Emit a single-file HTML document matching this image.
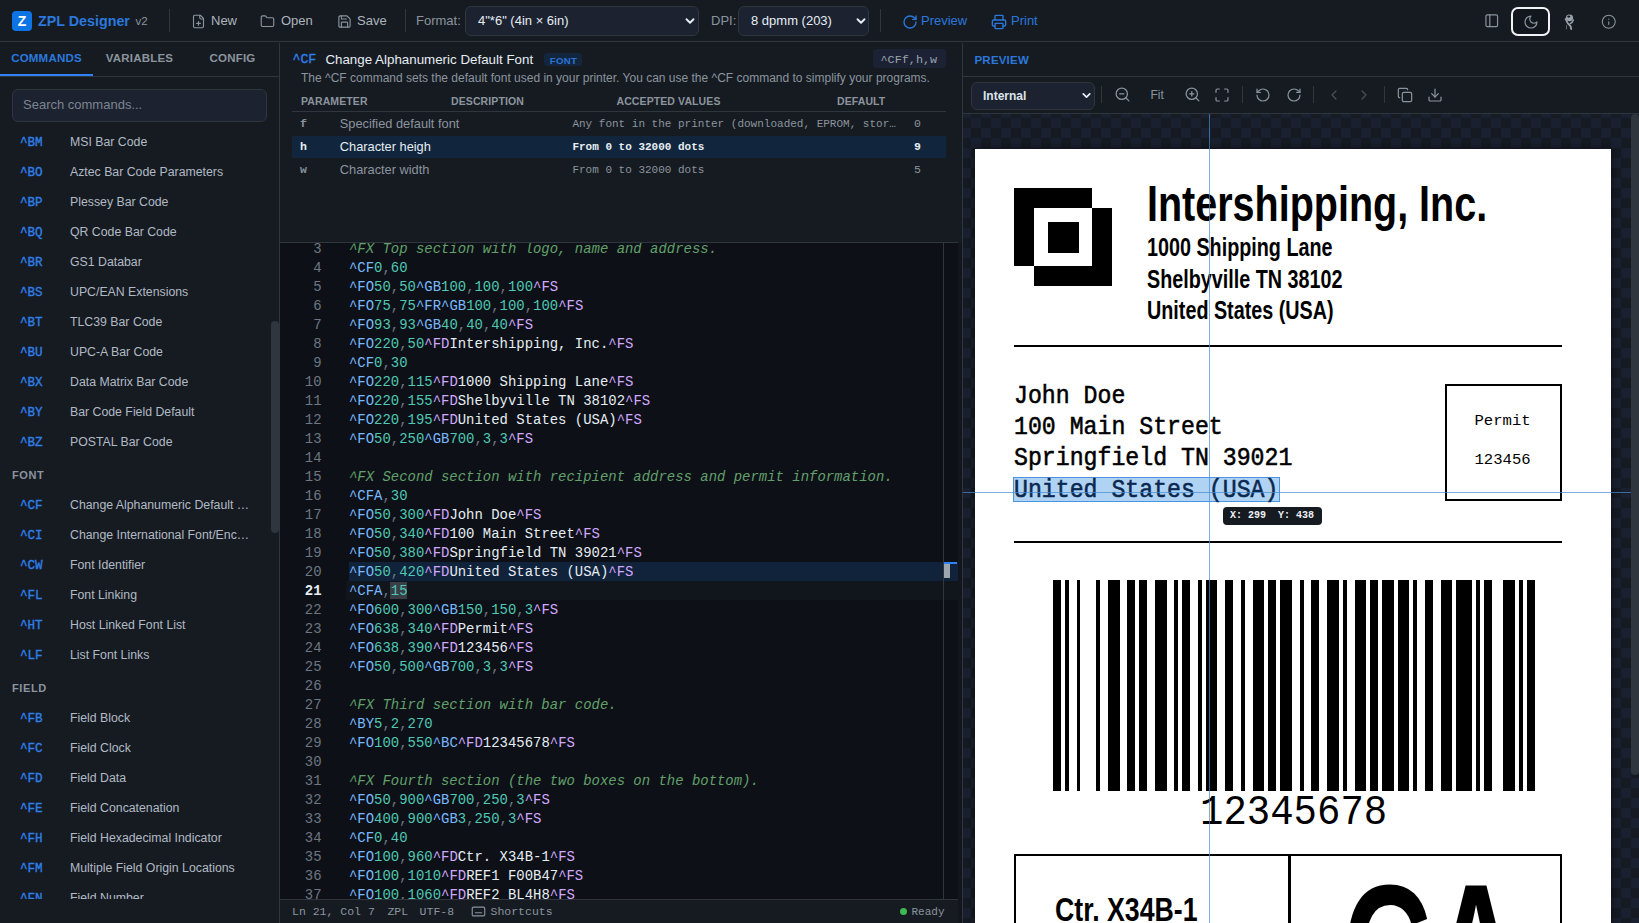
<!DOCTYPE html><html><head><meta charset="utf-8"><style>
*{margin:0;padding:0;box-sizing:border-box}
html,body{width:1639px;height:923px;overflow:hidden;background:#161b22;font-family:"Liberation Sans", sans-serif;}
.a{position:absolute;white-space:pre;}
.m{font-family:"Liberation Mono", monospace;}
</style></head><body>
<div class="a" style="left:0;top:0;width:1639px;height:42px;background:#161b22;border-bottom:1px solid #30363d"></div><div class="a" style="left:12px;top:11px;width:20px;height:20px;border-radius:4px;background:#0d74e6"></div><div class="a" style="left:12px;top:11px;width:20px;height:20px;line-height:20px;text-align:center;color:#fff;font-weight:bold;font-size:14px">Z</div><div class="a" style="left:38px;top:12px;font-size:14.3px;font-weight:bold;color:#2a78dc;line-height:18px">ZPL Designer</div><div class="a" style="left:135.5px;top:14px;font-size:11.5px;color:#8b949e;line-height:14px">v2</div><div class="a" style="left:169px;top:9px;width:1px;height:23px;background:#30363d"></div><svg style="position:absolute;left:191px;top:13.5px" width="15" height="15" viewBox="0 0 24 24" fill="none" stroke="#8b949e" stroke-width="1.8" stroke-linecap="round" stroke-linejoin="round" ><path d="M15 2H6a2 2 0 0 0-2 2v16a2 2 0 0 0 2 2h12a2 2 0 0 0 2-2V7Z"/><path d="M14 2v4a2 2 0 0 0 2 2h4"/><path d="M9 15h6"/><path d="M12 18v-6"/></svg><div class="a" style="left:211px;top:13px;font-size:13px;color:#adb5bd;line-height:16px">New</div><svg style="position:absolute;left:260px;top:13.5px" width="15" height="15" viewBox="0 0 24 24" fill="none" stroke="#8b949e" stroke-width="1.8" stroke-linecap="round" stroke-linejoin="round" ><path d="M20 20a2 2 0 0 0 2-2V8a2 2 0 0 0-2-2h-7.9a2 2 0 0 1-1.69-.9L9.6 3.9A2 2 0 0 0 7.93 3H4a2 2 0 0 0-2 2v13a2 2 0 0 0 2 2Z"/></svg><div class="a" style="left:281px;top:13px;font-size:13px;color:#adb5bd;line-height:16px">Open</div><svg style="position:absolute;left:337px;top:13.5px" width="15" height="15" viewBox="0 0 24 24" fill="none" stroke="#8b949e" stroke-width="1.8" stroke-linecap="round" stroke-linejoin="round" ><path d="M15.2 3a2 2 0 0 1 1.4.6l3.8 3.8a2 2 0 0 1 .6 1.4V19a2 2 0 0 1-2 2H5a2 2 0 0 1-2-2V5a2 2 0 0 1 2-2z"/><path d="M17 21v-7a1 1 0 0 0-1-1H8a1 1 0 0 0-1 1v7"/><path d="M7 3v4a1 1 0 0 0 1 1h7"/></svg><div class="a" style="left:357px;top:13px;font-size:13px;color:#adb5bd;line-height:16px">Save</div><div class="a" style="left:405px;top:9px;width:1px;height:23px;background:#30363d"></div><div class="a" style="left:416px;top:13px;font-size:13px;color:#8b949e;line-height:16px">Format:</div><div class="a" style="left:465px;top:6px;width:234px;height:30px;border:1px solid #30363d;border-radius:6px;background:#1c2230"></div><div class="a" style="left:478px;top:13px;font-size:13px;color:#e6edf3;line-height:16px">4"*6" (4in × 6in)</div><svg style="position:absolute;left:683px;top:14px" width="14" height="14" viewBox="0 0 24 24" fill="none" stroke="#e6edf3" stroke-width="3.2" stroke-linecap="round" stroke-linejoin="round" ><path d="m6 9 6 6 6-6"/></svg><div class="a" style="left:711px;top:13px;font-size:13px;color:#8b949e;line-height:16px">DPI:</div><div class="a" style="left:738px;top:6px;width:131px;height:30px;border:1px solid #30363d;border-radius:6px;background:#1c2230"></div><div class="a" style="left:751px;top:13px;font-size:13px;color:#e6edf3;line-height:16px">8 dpmm (203)</div><svg style="position:absolute;left:854px;top:14px" width="14" height="14" viewBox="0 0 24 24" fill="none" stroke="#e6edf3" stroke-width="3.2" stroke-linecap="round" stroke-linejoin="round" ><path d="m6 9 6 6 6-6"/></svg><div class="a" style="left:880px;top:9px;width:1px;height:23px;background:#30363d"></div><svg style="position:absolute;left:901.5px;top:13.5px" width="16" height="16" viewBox="0 0 24 24" fill="none" stroke="#2a78dc" stroke-width="2" stroke-linecap="round" stroke-linejoin="round" ><path d="M21 12a9 9 0 1 1-9-9c2.52 0 4.93 1 6.74 2.74L21 8"/><path d="M21 3v5h-5"/></svg><div class="a" style="left:921px;top:13px;font-size:13px;color:#2a78dc;line-height:16px">Preview</div><svg style="position:absolute;left:991px;top:13.5px" width="16" height="16" viewBox="0 0 24 24" fill="none" stroke="#2a78dc" stroke-width="2" stroke-linecap="round" stroke-linejoin="round" ><path d="M6 18H4a2 2 0 0 1-2-2v-5a2 2 0 0 1 2-2h16a2 2 0 0 1 2 2v5a2 2 0 0 1-2 2h-2"/><path d="M6 9V3a1 1 0 0 1 1-1h10a1 1 0 0 1 1 1v6"/><rect x="6" y="14" width="12" height="8" rx="1"/></svg><div class="a" style="left:1011px;top:13px;font-size:13px;color:#2a78dc;line-height:16px">Print</div><svg style="position:absolute;left:1483.5px;top:13.3px" width="15.5" height="15.5" viewBox="0 0 24 24" fill="none" stroke="#8b949e" stroke-width="1.8" stroke-linecap="round" stroke-linejoin="round" ><rect width="18" height="18" x="3" y="3" rx="2"/><path d="M9 3v18"/></svg><div class="a" style="left:1511px;top:7px;width:39px;height:29px;border:2px solid #f0f3f6;border-radius:7px;background:#12161d"></div><svg style="position:absolute;left:1523px;top:13.5px" width="16" height="16" viewBox="0 0 24 24" fill="none" stroke="#8b949e" stroke-width="1.8" stroke-linecap="round" stroke-linejoin="round" ><path d="M12 3a6 6 0 0 0 9 9 9 9 0 1 1-9-9Z"/></svg><svg class="a" style="left:1555px;top:8px" width="30" height="26" viewBox="0 0 30 26" fill="none" stroke="#9aa2ab" stroke-linecap="round"><ellipse cx="14.5" cy="9.8" rx="3.6" ry="3.4" fill="#9aa2ab" stroke="none"/><ellipse cx="13.8" cy="8.6" rx="1.6" ry="1.1" fill="#161b22" stroke="none"/><path d="M10.6 11 Q12.5 16 15.6 18.2 L16.2 21" stroke-width="1.8"/><path d="M18.3 12 Q17.5 14.5 15.2 15.6" stroke-width="1.5"/><path d="M11.5 17.5 L11.5 21" stroke-width="1" stroke="#5d656e"/></svg><svg style="position:absolute;left:1600.5px;top:13.5px" width="15.5" height="15.5" viewBox="0 0 24 24" fill="none" stroke="#8b949e" stroke-width="1.7" stroke-linecap="round" stroke-linejoin="round" ><circle cx="12" cy="12" r="10"/><path d="M12 16v-4"/><path d="M12 8h.01"/></svg><div class="a" style="left:0;top:43px;width:279px;height:880px;background:#161b22"></div><div class="a" style="left:279px;top:43px;width:1px;height:880px;background:#30363d"></div><div class="a" style="left:0;top:76px;width:279px;height:1px;background:#30363d"></div><div class="a" style="left:0;top:74px;width:93px;height:2px;background:#2f81f7"></div><div class="a" style="left:0px;top:50px;width:93px;text-align:center;font-size:11.5px;font-weight:bold;letter-spacing:0.2px;color:#2a78dc;line-height:16px">COMMANDS</div><div class="a" style="left:93px;top:50px;width:93px;text-align:center;font-size:11.5px;font-weight:bold;letter-spacing:0.2px;color:#8b949e;line-height:16px">VARIABLES</div><div class="a" style="left:186px;top:50px;width:93px;text-align:center;font-size:11.5px;font-weight:bold;letter-spacing:0.2px;color:#8b949e;line-height:16px">CONFIG</div><div class="a" style="left:12px;top:89px;width:255px;height:33px;border:1px solid #30363d;border-radius:6px;background:#1c2230"></div><div class="a" style="left:23px;top:97px;font-size:13px;color:#7d8590;line-height:16px">Search commands...</div><div class="a" style="left:0;top:124px;width:270px;height:775px;overflow:hidden"><div class="a m" style="left:20px;top:11.5px;font-size:12.6px;font-weight:normal;-webkit-text-stroke:0.35px #2f7fe8;color:#2f7fe8;line-height:15px">^BM</div><div class="a" style="left:70px;top:11.0px;font-size:12.3px;color:#b1bac4;line-height:15px">MSI Bar Code</div><div class="a m" style="left:20px;top:41.5px;font-size:12.6px;font-weight:normal;-webkit-text-stroke:0.35px #2f7fe8;color:#2f7fe8;line-height:15px">^BO</div><div class="a" style="left:70px;top:41.0px;font-size:12.3px;color:#b1bac4;line-height:15px">Aztec Bar Code Parameters</div><div class="a m" style="left:20px;top:71.5px;font-size:12.6px;font-weight:normal;-webkit-text-stroke:0.35px #2f7fe8;color:#2f7fe8;line-height:15px">^BP</div><div class="a" style="left:70px;top:71.0px;font-size:12.3px;color:#b1bac4;line-height:15px">Plessey Bar Code</div><div class="a m" style="left:20px;top:101.5px;font-size:12.6px;font-weight:normal;-webkit-text-stroke:0.35px #2f7fe8;color:#2f7fe8;line-height:15px">^BQ</div><div class="a" style="left:70px;top:101.0px;font-size:12.3px;color:#b1bac4;line-height:15px">QR Code Bar Code</div><div class="a m" style="left:20px;top:131.5px;font-size:12.6px;font-weight:normal;-webkit-text-stroke:0.35px #2f7fe8;color:#2f7fe8;line-height:15px">^BR</div><div class="a" style="left:70px;top:131.0px;font-size:12.3px;color:#b1bac4;line-height:15px">GS1 Databar</div><div class="a m" style="left:20px;top:161.5px;font-size:12.6px;font-weight:normal;-webkit-text-stroke:0.35px #2f7fe8;color:#2f7fe8;line-height:15px">^BS</div><div class="a" style="left:70px;top:161.0px;font-size:12.3px;color:#b1bac4;line-height:15px">UPC/EAN Extensions</div><div class="a m" style="left:20px;top:191.5px;font-size:12.6px;font-weight:normal;-webkit-text-stroke:0.35px #2f7fe8;color:#2f7fe8;line-height:15px">^BT</div><div class="a" style="left:70px;top:191.0px;font-size:12.3px;color:#b1bac4;line-height:15px">TLC39 Bar Code</div><div class="a m" style="left:20px;top:221.5px;font-size:12.6px;font-weight:normal;-webkit-text-stroke:0.35px #2f7fe8;color:#2f7fe8;line-height:15px">^BU</div><div class="a" style="left:70px;top:221.0px;font-size:12.3px;color:#b1bac4;line-height:15px">UPC-A Bar Code</div><div class="a m" style="left:20px;top:251.5px;font-size:12.6px;font-weight:normal;-webkit-text-stroke:0.35px #2f7fe8;color:#2f7fe8;line-height:15px">^BX</div><div class="a" style="left:70px;top:251.0px;font-size:12.3px;color:#b1bac4;line-height:15px">Data Matrix Bar Code</div><div class="a m" style="left:20px;top:281.5px;font-size:12.6px;font-weight:normal;-webkit-text-stroke:0.35px #2f7fe8;color:#2f7fe8;line-height:15px">^BY</div><div class="a" style="left:70px;top:281.0px;font-size:12.3px;color:#b1bac4;line-height:15px">Bar Code Field Default</div><div class="a m" style="left:20px;top:311.5px;font-size:12.6px;font-weight:normal;-webkit-text-stroke:0.35px #2f7fe8;color:#2f7fe8;line-height:15px">^BZ</div><div class="a" style="left:70px;top:311.0px;font-size:12.3px;color:#b1bac4;line-height:15px">POSTAL Bar Code</div><div class="a" style="left:12px;top:344.0px;font-size:11px;font-weight:bold;letter-spacing:0.6px;color:#8b949e;line-height:14px">FONT</div><div class="a m" style="left:20px;top:374.7px;font-size:12.6px;font-weight:normal;-webkit-text-stroke:0.35px #2f7fe8;color:#2f7fe8;line-height:15px">^CF</div><div class="a" style="left:70px;top:374.2px;font-size:12.3px;color:#b1bac4;line-height:15px">Change Alphanumeric Default …</div><div class="a m" style="left:20px;top:404.7px;font-size:12.6px;font-weight:normal;-webkit-text-stroke:0.35px #2f7fe8;color:#2f7fe8;line-height:15px">^CI</div><div class="a" style="left:70px;top:404.2px;font-size:12.3px;color:#b1bac4;line-height:15px">Change International Font/Enc…</div><div class="a m" style="left:20px;top:434.7px;font-size:12.6px;font-weight:normal;-webkit-text-stroke:0.35px #2f7fe8;color:#2f7fe8;line-height:15px">^CW</div><div class="a" style="left:70px;top:434.2px;font-size:12.3px;color:#b1bac4;line-height:15px">Font Identifier</div><div class="a m" style="left:20px;top:464.7px;font-size:12.6px;font-weight:normal;-webkit-text-stroke:0.35px #2f7fe8;color:#2f7fe8;line-height:15px">^FL</div><div class="a" style="left:70px;top:464.2px;font-size:12.3px;color:#b1bac4;line-height:15px">Font Linking</div><div class="a m" style="left:20px;top:494.7px;font-size:12.6px;font-weight:normal;-webkit-text-stroke:0.35px #2f7fe8;color:#2f7fe8;line-height:15px">^HT</div><div class="a" style="left:70px;top:494.2px;font-size:12.3px;color:#b1bac4;line-height:15px">Host Linked Font List</div><div class="a m" style="left:20px;top:524.7px;font-size:12.6px;font-weight:normal;-webkit-text-stroke:0.35px #2f7fe8;color:#2f7fe8;line-height:15px">^LF</div><div class="a" style="left:70px;top:524.2px;font-size:12.3px;color:#b1bac4;line-height:15px">List Font Links</div><div class="a" style="left:12px;top:557.2px;font-size:11px;font-weight:bold;letter-spacing:0.6px;color:#8b949e;line-height:14px">FIELD</div><div class="a m" style="left:20px;top:587.9px;font-size:12.6px;font-weight:normal;-webkit-text-stroke:0.35px #2f7fe8;color:#2f7fe8;line-height:15px">^FB</div><div class="a" style="left:70px;top:587.4px;font-size:12.3px;color:#b1bac4;line-height:15px">Field Block</div><div class="a m" style="left:20px;top:617.9px;font-size:12.6px;font-weight:normal;-webkit-text-stroke:0.35px #2f7fe8;color:#2f7fe8;line-height:15px">^FC</div><div class="a" style="left:70px;top:617.4px;font-size:12.3px;color:#b1bac4;line-height:15px">Field Clock</div><div class="a m" style="left:20px;top:647.9px;font-size:12.6px;font-weight:normal;-webkit-text-stroke:0.35px #2f7fe8;color:#2f7fe8;line-height:15px">^FD</div><div class="a" style="left:70px;top:647.4px;font-size:12.3px;color:#b1bac4;line-height:15px">Field Data</div><div class="a m" style="left:20px;top:677.9px;font-size:12.6px;font-weight:normal;-webkit-text-stroke:0.35px #2f7fe8;color:#2f7fe8;line-height:15px">^FE</div><div class="a" style="left:70px;top:677.4px;font-size:12.3px;color:#b1bac4;line-height:15px">Field Concatenation</div><div class="a m" style="left:20px;top:707.9px;font-size:12.6px;font-weight:normal;-webkit-text-stroke:0.35px #2f7fe8;color:#2f7fe8;line-height:15px">^FH</div><div class="a" style="left:70px;top:707.4px;font-size:12.3px;color:#b1bac4;line-height:15px">Field Hexadecimal Indicator</div><div class="a m" style="left:20px;top:737.9px;font-size:12.6px;font-weight:normal;-webkit-text-stroke:0.35px #2f7fe8;color:#2f7fe8;line-height:15px">^FM</div><div class="a" style="left:70px;top:737.4px;font-size:12.3px;color:#b1bac4;line-height:15px">Multiple Field Origin Locations</div><div class="a m" style="left:20px;top:767.9px;font-size:12.6px;font-weight:normal;-webkit-text-stroke:0.35px #2f7fe8;color:#2f7fe8;line-height:15px">^FN</div><div class="a" style="left:70px;top:767.4px;font-size:12.3px;color:#b1bac4;line-height:15px">Field Number</div></div><div class="a" style="left:271px;top:321px;width:8px;height:212px;border-radius:4px;background:#30363d"></div><div class="a" style="left:280px;top:43px;width:682px;height:880px;background:#161b22"></div><div class="a" style="left:962px;top:43px;width:1px;height:880px;background:#30363d"></div><div class="a m" style="left:292.5px;top:52px;font-size:13.2px;font-weight:normal;-webkit-text-stroke:0.35px #2f7fe8;color:#2f7fe8;line-height:16px">^CF</div><div class="a" style="left:325.4px;top:52px;font-size:13.35px;color:#e6edf3;line-height:16px">Change Alphanumeric Default Font</div><div class="a" style="left:544px;top:53px;width:38px;height:13px;border-radius:3px;background:#13263d"></div><div class="a" style="left:544.5px;top:55px;width:38px;text-align:center;font-size:9.6px;font-weight:bold;color:#2a74d8;line-height:11px;letter-spacing:0.3px">FONT</div><div class="a" style="left:872.5px;top:49px;width:73.5px;height:19px;border-radius:4px;background:#1c2233"></div><div class="a m" style="left:880.5px;top:53px;font-size:11.8px;color:#9aa4ae;line-height:14px">^CFf,h,w</div><div class="a" style="left:301px;top:71px;font-size:12px;color:#8b949e;line-height:14px">The ^CF command sets the default font used in your printer. You can use the ^CF command to simplify your programs.</div><div class="a" style="left:301px;top:94.5px;font-size:10.5px;font-weight:bold;color:#8b949e;line-height:13px;letter-spacing:0.1px">PARAMETER</div><div class="a" style="left:451px;top:94.5px;font-size:10.5px;font-weight:bold;color:#8b949e;line-height:13px;letter-spacing:0.1px">DESCRIPTION</div><div class="a" style="left:616.5px;top:94.5px;font-size:10.5px;font-weight:bold;color:#8b949e;line-height:13px;letter-spacing:0.1px">ACCEPTED VALUES</div><div class="a" style="left:837px;top:94.5px;font-size:10.5px;font-weight:bold;color:#8b949e;line-height:13px;letter-spacing:0.1px">DEFAULT</div><div class="a" style="left:292px;top:111px;width:654px;height:1px;background:#30363d"></div><div class="a" style="left:292px;top:136px;width:654px;height:22px;background:#11263c"></div><div class="a m" style="left:300px;top:116.5px;font-size:11.5px;font-weight:bold;color:#8b949e;line-height:14px">f</div><div class="a" style="left:339.8px;top:115.5px;font-size:12.8px;color:#8b949e;line-height:15px">Specified default font</div><div class="a m" style="left:572.4px;top:116.5px;font-size:11px;font-weight:normal;color:#8b949e;line-height:14px">Any font in the printer (downloaded, EPROM, stor…</div><div class="a m" style="left:914px;top:116.5px;font-size:11.5px;font-weight:normal;color:#8b949e;line-height:14px">0</div><div class="a m" style="left:300px;top:139.5px;font-size:11.5px;font-weight:bold;color:#e6edf3;line-height:14px">h</div><div class="a" style="left:339.8px;top:138.5px;font-size:12.8px;color:#e6edf3;line-height:15px">Character heigh</div><div class="a m" style="left:572.4px;top:139.5px;font-size:11px;font-weight:bold;color:#e6edf3;line-height:14px">From 0 to 32000 dots</div><div class="a m" style="left:914px;top:139.5px;font-size:11.5px;font-weight:bold;color:#e6edf3;line-height:14px">9</div><div class="a m" style="left:300px;top:162.5px;font-size:11.5px;font-weight:bold;color:#8b949e;line-height:14px">w</div><div class="a" style="left:339.8px;top:161.5px;font-size:12.8px;color:#8b949e;line-height:15px">Character width</div><div class="a m" style="left:572.4px;top:162.5px;font-size:11px;font-weight:normal;color:#8b949e;line-height:14px">From 0 to 32000 dots</div><div class="a m" style="left:914px;top:162.5px;font-size:11.5px;font-weight:normal;color:#8b949e;line-height:14px">5</div><div class="a" style="left:280px;top:242px;width:678px;height:1px;background:#30363d"></div><div class="a" style="left:280px;top:243px;width:678px;height:656px;background:#0d1117;overflow:hidden"><div class="a" style="left:69px;top:318.5px;width:609px;height:19px;background:#10233b"></div><div class="a" style="left:66px;top:337.5px;width:612px;height:19px;background:#11151c"></div><div class="a" style="left:110px;top:338.5px;width:17px;height:17px;background:#3a3f47"></div><div class="a m" style="left:0;top:-3.5px;width:41.5px;text-align:right;font-size:13.95px;line-height:19px;color:#6e7681;font-weight:normal;transform:scaleY(1.07);transform-origin:0 13.2px">3</div><div class="a m" style="left:69px;top:-3.5px;font-size:13.95px;line-height:19px;transform:scaleY(1.07);transform-origin:0 13.2px"><span style="color:#62a06b;font-style:italic">^FX Top section with logo, name and address.</span></div><div class="a m" style="left:0;top:15.5px;width:41.5px;text-align:right;font-size:13.95px;line-height:19px;color:#6e7681;font-weight:normal;transform:scaleY(1.07);transform-origin:0 13.2px">4</div><div class="a m" style="left:69px;top:15.5px;font-size:13.95px;line-height:19px;transform:scaleY(1.07);transform-origin:0 13.2px"><span style="color:#79b8ff">^CF</span><span style="color:#4fc8b4">0</span><span style="color:#6e7681">,</span><span style="color:#4fc8b4">60</span></div><div class="a m" style="left:0;top:34.5px;width:41.5px;text-align:right;font-size:13.95px;line-height:19px;color:#6e7681;font-weight:normal;transform:scaleY(1.07);transform-origin:0 13.2px">5</div><div class="a m" style="left:69px;top:34.5px;font-size:13.95px;line-height:19px;transform:scaleY(1.07);transform-origin:0 13.2px"><span style="color:#79b8ff">^FO</span><span style="color:#4fc8b4">50</span><span style="color:#6e7681">,</span><span style="color:#4fc8b4">50</span><span style="color:#79b8ff">^GB</span><span style="color:#4fc8b4">100</span><span style="color:#6e7681">,</span><span style="color:#4fc8b4">100</span><span style="color:#6e7681">,</span><span style="color:#4fc8b4">100</span><span style="color:#d2a8ff">^FS</span></div><div class="a m" style="left:0;top:53.5px;width:41.5px;text-align:right;font-size:13.95px;line-height:19px;color:#6e7681;font-weight:normal;transform:scaleY(1.07);transform-origin:0 13.2px">6</div><div class="a m" style="left:69px;top:53.5px;font-size:13.95px;line-height:19px;transform:scaleY(1.07);transform-origin:0 13.2px"><span style="color:#79b8ff">^FO</span><span style="color:#4fc8b4">75</span><span style="color:#6e7681">,</span><span style="color:#4fc8b4">75</span><span style="color:#79b8ff">^FR</span><span style="color:#79b8ff">^GB</span><span style="color:#4fc8b4">100</span><span style="color:#6e7681">,</span><span style="color:#4fc8b4">100</span><span style="color:#6e7681">,</span><span style="color:#4fc8b4">100</span><span style="color:#d2a8ff">^FS</span></div><div class="a m" style="left:0;top:72.5px;width:41.5px;text-align:right;font-size:13.95px;line-height:19px;color:#6e7681;font-weight:normal;transform:scaleY(1.07);transform-origin:0 13.2px">7</div><div class="a m" style="left:69px;top:72.5px;font-size:13.95px;line-height:19px;transform:scaleY(1.07);transform-origin:0 13.2px"><span style="color:#79b8ff">^FO</span><span style="color:#4fc8b4">93</span><span style="color:#6e7681">,</span><span style="color:#4fc8b4">93</span><span style="color:#79b8ff">^GB</span><span style="color:#4fc8b4">40</span><span style="color:#6e7681">,</span><span style="color:#4fc8b4">40</span><span style="color:#6e7681">,</span><span style="color:#4fc8b4">40</span><span style="color:#d2a8ff">^FS</span></div><div class="a m" style="left:0;top:91.5px;width:41.5px;text-align:right;font-size:13.95px;line-height:19px;color:#6e7681;font-weight:normal;transform:scaleY(1.07);transform-origin:0 13.2px">8</div><div class="a m" style="left:69px;top:91.5px;font-size:13.95px;line-height:19px;transform:scaleY(1.07);transform-origin:0 13.2px"><span style="color:#79b8ff">^FO</span><span style="color:#4fc8b4">220</span><span style="color:#6e7681">,</span><span style="color:#4fc8b4">50</span><span style="color:#d2a8ff">^FD</span><span style="color:#e6edf3">Intershipping, Inc.</span><span style="color:#d2a8ff">^FS</span></div><div class="a m" style="left:0;top:110.5px;width:41.5px;text-align:right;font-size:13.95px;line-height:19px;color:#6e7681;font-weight:normal;transform:scaleY(1.07);transform-origin:0 13.2px">9</div><div class="a m" style="left:69px;top:110.5px;font-size:13.95px;line-height:19px;transform:scaleY(1.07);transform-origin:0 13.2px"><span style="color:#79b8ff">^CF</span><span style="color:#4fc8b4">0</span><span style="color:#6e7681">,</span><span style="color:#4fc8b4">30</span></div><div class="a m" style="left:0;top:129.5px;width:41.5px;text-align:right;font-size:13.95px;line-height:19px;color:#6e7681;font-weight:normal;transform:scaleY(1.07);transform-origin:0 13.2px">10</div><div class="a m" style="left:69px;top:129.5px;font-size:13.95px;line-height:19px;transform:scaleY(1.07);transform-origin:0 13.2px"><span style="color:#79b8ff">^FO</span><span style="color:#4fc8b4">220</span><span style="color:#6e7681">,</span><span style="color:#4fc8b4">115</span><span style="color:#d2a8ff">^FD</span><span style="color:#e6edf3">1000 Shipping Lane</span><span style="color:#d2a8ff">^FS</span></div><div class="a m" style="left:0;top:148.5px;width:41.5px;text-align:right;font-size:13.95px;line-height:19px;color:#6e7681;font-weight:normal;transform:scaleY(1.07);transform-origin:0 13.2px">11</div><div class="a m" style="left:69px;top:148.5px;font-size:13.95px;line-height:19px;transform:scaleY(1.07);transform-origin:0 13.2px"><span style="color:#79b8ff">^FO</span><span style="color:#4fc8b4">220</span><span style="color:#6e7681">,</span><span style="color:#4fc8b4">155</span><span style="color:#d2a8ff">^FD</span><span style="color:#e6edf3">Shelbyville TN 38102</span><span style="color:#d2a8ff">^FS</span></div><div class="a m" style="left:0;top:167.5px;width:41.5px;text-align:right;font-size:13.95px;line-height:19px;color:#6e7681;font-weight:normal;transform:scaleY(1.07);transform-origin:0 13.2px">12</div><div class="a m" style="left:69px;top:167.5px;font-size:13.95px;line-height:19px;transform:scaleY(1.07);transform-origin:0 13.2px"><span style="color:#79b8ff">^FO</span><span style="color:#4fc8b4">220</span><span style="color:#6e7681">,</span><span style="color:#4fc8b4">195</span><span style="color:#d2a8ff">^FD</span><span style="color:#e6edf3">United States (USA)</span><span style="color:#d2a8ff">^FS</span></div><div class="a m" style="left:0;top:186.5px;width:41.5px;text-align:right;font-size:13.95px;line-height:19px;color:#6e7681;font-weight:normal;transform:scaleY(1.07);transform-origin:0 13.2px">13</div><div class="a m" style="left:69px;top:186.5px;font-size:13.95px;line-height:19px;transform:scaleY(1.07);transform-origin:0 13.2px"><span style="color:#79b8ff">^FO</span><span style="color:#4fc8b4">50</span><span style="color:#6e7681">,</span><span style="color:#4fc8b4">250</span><span style="color:#79b8ff">^GB</span><span style="color:#4fc8b4">700</span><span style="color:#6e7681">,</span><span style="color:#4fc8b4">3</span><span style="color:#6e7681">,</span><span style="color:#4fc8b4">3</span><span style="color:#d2a8ff">^FS</span></div><div class="a m" style="left:0;top:205.5px;width:41.5px;text-align:right;font-size:13.95px;line-height:19px;color:#6e7681;font-weight:normal;transform:scaleY(1.07);transform-origin:0 13.2px">14</div><div class="a m" style="left:69px;top:205.5px;font-size:13.95px;line-height:19px;transform:scaleY(1.07);transform-origin:0 13.2px"></div><div class="a m" style="left:0;top:224.5px;width:41.5px;text-align:right;font-size:13.95px;line-height:19px;color:#6e7681;font-weight:normal;transform:scaleY(1.07);transform-origin:0 13.2px">15</div><div class="a m" style="left:69px;top:224.5px;font-size:13.95px;line-height:19px;transform:scaleY(1.07);transform-origin:0 13.2px"><span style="color:#62a06b;font-style:italic">^FX Second section with recipient address and permit information.</span></div><div class="a m" style="left:0;top:243.5px;width:41.5px;text-align:right;font-size:13.95px;line-height:19px;color:#6e7681;font-weight:normal;transform:scaleY(1.07);transform-origin:0 13.2px">16</div><div class="a m" style="left:69px;top:243.5px;font-size:13.95px;line-height:19px;transform:scaleY(1.07);transform-origin:0 13.2px"><span style="color:#79b8ff">^CFA</span><span style="color:#6e7681">,</span><span style="color:#4fc8b4">30</span></div><div class="a m" style="left:0;top:262.5px;width:41.5px;text-align:right;font-size:13.95px;line-height:19px;color:#6e7681;font-weight:normal;transform:scaleY(1.07);transform-origin:0 13.2px">17</div><div class="a m" style="left:69px;top:262.5px;font-size:13.95px;line-height:19px;transform:scaleY(1.07);transform-origin:0 13.2px"><span style="color:#79b8ff">^FO</span><span style="color:#4fc8b4">50</span><span style="color:#6e7681">,</span><span style="color:#4fc8b4">300</span><span style="color:#d2a8ff">^FD</span><span style="color:#e6edf3">John Doe</span><span style="color:#d2a8ff">^FS</span></div><div class="a m" style="left:0;top:281.5px;width:41.5px;text-align:right;font-size:13.95px;line-height:19px;color:#6e7681;font-weight:normal;transform:scaleY(1.07);transform-origin:0 13.2px">18</div><div class="a m" style="left:69px;top:281.5px;font-size:13.95px;line-height:19px;transform:scaleY(1.07);transform-origin:0 13.2px"><span style="color:#79b8ff">^FO</span><span style="color:#4fc8b4">50</span><span style="color:#6e7681">,</span><span style="color:#4fc8b4">340</span><span style="color:#d2a8ff">^FD</span><span style="color:#e6edf3">100 Main Street</span><span style="color:#d2a8ff">^FS</span></div><div class="a m" style="left:0;top:300.5px;width:41.5px;text-align:right;font-size:13.95px;line-height:19px;color:#6e7681;font-weight:normal;transform:scaleY(1.07);transform-origin:0 13.2px">19</div><div class="a m" style="left:69px;top:300.5px;font-size:13.95px;line-height:19px;transform:scaleY(1.07);transform-origin:0 13.2px"><span style="color:#79b8ff">^FO</span><span style="color:#4fc8b4">50</span><span style="color:#6e7681">,</span><span style="color:#4fc8b4">380</span><span style="color:#d2a8ff">^FD</span><span style="color:#e6edf3">Springfield TN 39021</span><span style="color:#d2a8ff">^FS</span></div><div class="a m" style="left:0;top:319.5px;width:41.5px;text-align:right;font-size:13.95px;line-height:19px;color:#6e7681;font-weight:normal;transform:scaleY(1.07);transform-origin:0 13.2px">20</div><div class="a m" style="left:69px;top:319.5px;font-size:13.95px;line-height:19px;transform:scaleY(1.07);transform-origin:0 13.2px"><span style="color:#79b8ff">^FO</span><span style="color:#4fc8b4">50</span><span style="color:#6e7681">,</span><span style="color:#4fc8b4">420</span><span style="color:#d2a8ff">^FD</span><span style="color:#e6edf3">United States (USA)</span><span style="color:#d2a8ff">^FS</span></div><div class="a m" style="left:0;top:338.5px;width:41.5px;text-align:right;font-size:13.95px;line-height:19px;color:#e6edf3;font-weight:bold;transform:scaleY(1.07);transform-origin:0 13.2px">21</div><div class="a m" style="left:69px;top:338.5px;font-size:13.95px;line-height:19px;transform:scaleY(1.07);transform-origin:0 13.2px"><span style="color:#79b8ff">^CFA</span><span style="color:#6e7681">,</span><span style="color:#4fc8b4">15</span></div><div class="a m" style="left:0;top:357.5px;width:41.5px;text-align:right;font-size:13.95px;line-height:19px;color:#6e7681;font-weight:normal;transform:scaleY(1.07);transform-origin:0 13.2px">22</div><div class="a m" style="left:69px;top:357.5px;font-size:13.95px;line-height:19px;transform:scaleY(1.07);transform-origin:0 13.2px"><span style="color:#79b8ff">^FO</span><span style="color:#4fc8b4">600</span><span style="color:#6e7681">,</span><span style="color:#4fc8b4">300</span><span style="color:#79b8ff">^GB</span><span style="color:#4fc8b4">150</span><span style="color:#6e7681">,</span><span style="color:#4fc8b4">150</span><span style="color:#6e7681">,</span><span style="color:#4fc8b4">3</span><span style="color:#d2a8ff">^FS</span></div><div class="a m" style="left:0;top:376.5px;width:41.5px;text-align:right;font-size:13.95px;line-height:19px;color:#6e7681;font-weight:normal;transform:scaleY(1.07);transform-origin:0 13.2px">23</div><div class="a m" style="left:69px;top:376.5px;font-size:13.95px;line-height:19px;transform:scaleY(1.07);transform-origin:0 13.2px"><span style="color:#79b8ff">^FO</span><span style="color:#4fc8b4">638</span><span style="color:#6e7681">,</span><span style="color:#4fc8b4">340</span><span style="color:#d2a8ff">^FD</span><span style="color:#e6edf3">Permit</span><span style="color:#d2a8ff">^FS</span></div><div class="a m" style="left:0;top:395.5px;width:41.5px;text-align:right;font-size:13.95px;line-height:19px;color:#6e7681;font-weight:normal;transform:scaleY(1.07);transform-origin:0 13.2px">24</div><div class="a m" style="left:69px;top:395.5px;font-size:13.95px;line-height:19px;transform:scaleY(1.07);transform-origin:0 13.2px"><span style="color:#79b8ff">^FO</span><span style="color:#4fc8b4">638</span><span style="color:#6e7681">,</span><span style="color:#4fc8b4">390</span><span style="color:#d2a8ff">^FD</span><span style="color:#e6edf3">123456</span><span style="color:#d2a8ff">^FS</span></div><div class="a m" style="left:0;top:414.5px;width:41.5px;text-align:right;font-size:13.95px;line-height:19px;color:#6e7681;font-weight:normal;transform:scaleY(1.07);transform-origin:0 13.2px">25</div><div class="a m" style="left:69px;top:414.5px;font-size:13.95px;line-height:19px;transform:scaleY(1.07);transform-origin:0 13.2px"><span style="color:#79b8ff">^FO</span><span style="color:#4fc8b4">50</span><span style="color:#6e7681">,</span><span style="color:#4fc8b4">500</span><span style="color:#79b8ff">^GB</span><span style="color:#4fc8b4">700</span><span style="color:#6e7681">,</span><span style="color:#4fc8b4">3</span><span style="color:#6e7681">,</span><span style="color:#4fc8b4">3</span><span style="color:#d2a8ff">^FS</span></div><div class="a m" style="left:0;top:433.5px;width:41.5px;text-align:right;font-size:13.95px;line-height:19px;color:#6e7681;font-weight:normal;transform:scaleY(1.07);transform-origin:0 13.2px">26</div><div class="a m" style="left:69px;top:433.5px;font-size:13.95px;line-height:19px;transform:scaleY(1.07);transform-origin:0 13.2px"></div><div class="a m" style="left:0;top:452.5px;width:41.5px;text-align:right;font-size:13.95px;line-height:19px;color:#6e7681;font-weight:normal;transform:scaleY(1.07);transform-origin:0 13.2px">27</div><div class="a m" style="left:69px;top:452.5px;font-size:13.95px;line-height:19px;transform:scaleY(1.07);transform-origin:0 13.2px"><span style="color:#62a06b;font-style:italic">^FX Third section with bar code.</span></div><div class="a m" style="left:0;top:471.5px;width:41.5px;text-align:right;font-size:13.95px;line-height:19px;color:#6e7681;font-weight:normal;transform:scaleY(1.07);transform-origin:0 13.2px">28</div><div class="a m" style="left:69px;top:471.5px;font-size:13.95px;line-height:19px;transform:scaleY(1.07);transform-origin:0 13.2px"><span style="color:#79b8ff">^BY</span><span style="color:#4fc8b4">5</span><span style="color:#6e7681">,</span><span style="color:#4fc8b4">2</span><span style="color:#6e7681">,</span><span style="color:#4fc8b4">270</span></div><div class="a m" style="left:0;top:490.5px;width:41.5px;text-align:right;font-size:13.95px;line-height:19px;color:#6e7681;font-weight:normal;transform:scaleY(1.07);transform-origin:0 13.2px">29</div><div class="a m" style="left:69px;top:490.5px;font-size:13.95px;line-height:19px;transform:scaleY(1.07);transform-origin:0 13.2px"><span style="color:#79b8ff">^FO</span><span style="color:#4fc8b4">100</span><span style="color:#6e7681">,</span><span style="color:#4fc8b4">550</span><span style="color:#79b8ff">^BC</span><span style="color:#d2a8ff">^FD</span><span style="color:#e6edf3">12345678</span><span style="color:#d2a8ff">^FS</span></div><div class="a m" style="left:0;top:509.5px;width:41.5px;text-align:right;font-size:13.95px;line-height:19px;color:#6e7681;font-weight:normal;transform:scaleY(1.07);transform-origin:0 13.2px">30</div><div class="a m" style="left:69px;top:509.5px;font-size:13.95px;line-height:19px;transform:scaleY(1.07);transform-origin:0 13.2px"></div><div class="a m" style="left:0;top:528.5px;width:41.5px;text-align:right;font-size:13.95px;line-height:19px;color:#6e7681;font-weight:normal;transform:scaleY(1.07);transform-origin:0 13.2px">31</div><div class="a m" style="left:69px;top:528.5px;font-size:13.95px;line-height:19px;transform:scaleY(1.07);transform-origin:0 13.2px"><span style="color:#62a06b;font-style:italic">^FX Fourth section (the two boxes on the bottom).</span></div><div class="a m" style="left:0;top:547.5px;width:41.5px;text-align:right;font-size:13.95px;line-height:19px;color:#6e7681;font-weight:normal;transform:scaleY(1.07);transform-origin:0 13.2px">32</div><div class="a m" style="left:69px;top:547.5px;font-size:13.95px;line-height:19px;transform:scaleY(1.07);transform-origin:0 13.2px"><span style="color:#79b8ff">^FO</span><span style="color:#4fc8b4">50</span><span style="color:#6e7681">,</span><span style="color:#4fc8b4">900</span><span style="color:#79b8ff">^GB</span><span style="color:#4fc8b4">700</span><span style="color:#6e7681">,</span><span style="color:#4fc8b4">250</span><span style="color:#6e7681">,</span><span style="color:#4fc8b4">3</span><span style="color:#d2a8ff">^FS</span></div><div class="a m" style="left:0;top:566.5px;width:41.5px;text-align:right;font-size:13.95px;line-height:19px;color:#6e7681;font-weight:normal;transform:scaleY(1.07);transform-origin:0 13.2px">33</div><div class="a m" style="left:69px;top:566.5px;font-size:13.95px;line-height:19px;transform:scaleY(1.07);transform-origin:0 13.2px"><span style="color:#79b8ff">^FO</span><span style="color:#4fc8b4">400</span><span style="color:#6e7681">,</span><span style="color:#4fc8b4">900</span><span style="color:#79b8ff">^GB</span><span style="color:#4fc8b4">3</span><span style="color:#6e7681">,</span><span style="color:#4fc8b4">250</span><span style="color:#6e7681">,</span><span style="color:#4fc8b4">3</span><span style="color:#d2a8ff">^FS</span></div><div class="a m" style="left:0;top:585.5px;width:41.5px;text-align:right;font-size:13.95px;line-height:19px;color:#6e7681;font-weight:normal;transform:scaleY(1.07);transform-origin:0 13.2px">34</div><div class="a m" style="left:69px;top:585.5px;font-size:13.95px;line-height:19px;transform:scaleY(1.07);transform-origin:0 13.2px"><span style="color:#79b8ff">^CF</span><span style="color:#4fc8b4">0</span><span style="color:#6e7681">,</span><span style="color:#4fc8b4">40</span></div><div class="a m" style="left:0;top:604.5px;width:41.5px;text-align:right;font-size:13.95px;line-height:19px;color:#6e7681;font-weight:normal;transform:scaleY(1.07);transform-origin:0 13.2px">35</div><div class="a m" style="left:69px;top:604.5px;font-size:13.95px;line-height:19px;transform:scaleY(1.07);transform-origin:0 13.2px"><span style="color:#79b8ff">^FO</span><span style="color:#4fc8b4">100</span><span style="color:#6e7681">,</span><span style="color:#4fc8b4">960</span><span style="color:#d2a8ff">^FD</span><span style="color:#e6edf3">Ctr. X34B-1</span><span style="color:#d2a8ff">^FS</span></div><div class="a m" style="left:0;top:623.5px;width:41.5px;text-align:right;font-size:13.95px;line-height:19px;color:#6e7681;font-weight:normal;transform:scaleY(1.07);transform-origin:0 13.2px">36</div><div class="a m" style="left:69px;top:623.5px;font-size:13.95px;line-height:19px;transform:scaleY(1.07);transform-origin:0 13.2px"><span style="color:#79b8ff">^FO</span><span style="color:#4fc8b4">100</span><span style="color:#6e7681">,</span><span style="color:#4fc8b4">1010</span><span style="color:#d2a8ff">^FD</span><span style="color:#e6edf3">REF1 F00B47</span><span style="color:#d2a8ff">^FS</span></div><div class="a m" style="left:0;top:642.5px;width:41.5px;text-align:right;font-size:13.95px;line-height:19px;color:#6e7681;font-weight:normal;transform:scaleY(1.07);transform-origin:0 13.2px">37</div><div class="a m" style="left:69px;top:642.5px;font-size:13.95px;line-height:19px;transform:scaleY(1.07);transform-origin:0 13.2px"><span style="color:#79b8ff">^FO</span><span style="color:#4fc8b4">100</span><span style="color:#6e7681">,</span><span style="color:#4fc8b4">1060</span><span style="color:#d2a8ff">^FD</span><span style="color:#e6edf3">REF2 BL4H8</span><span style="color:#d2a8ff">^FS</span></div><div class="a" style="left:663px;top:0;width:1px;height:656px;background:#30363d"></div><div class="a" style="left:664px;top:318.5px;width:13px;height:2px;background:#2f81f7"></div><div class="a" style="left:664px;top:320.5px;width:6px;height:14px;background:#9da5ae"></div></div><div class="a" style="left:958px;top:243px;width:4px;height:680px;background:#12161c"></div><div class="a" style="left:280px;top:899px;width:678px;height:1px;background:#30363d"></div><div class="a" style="left:280px;top:900px;width:678px;height:23px;background:#161b22"></div><div class="a m" style="left:292px;top:905px;font-size:11.5px;color:#8b949e;line-height:14px">Ln 21, Col 7</div><div class="a m" style="left:387.4px;top:905px;font-size:11.5px;color:#8b949e;line-height:14px">ZPL</div><div class="a m" style="left:419.6px;top:905px;font-size:11.5px;color:#8b949e;line-height:14px">UTF-8</div><svg style="position:absolute;left:471px;top:904px" width="15" height="15" viewBox="0 0 24 24" fill="none" stroke="#8b949e" stroke-width="1.8" stroke-linecap="round" stroke-linejoin="round" ><rect width="20" height="14" x="2" y="5" rx="2"/><path d="M7 14h10"/></svg><div class="a m" style="left:490.5px;top:905px;font-size:11.5px;color:#8b949e;line-height:14px">Shortcuts</div><div class="a" style="left:900px;top:908px;width:7px;height:7px;border-radius:50%;background:#3fb950"></div><div class="a m" style="left:911.5px;top:905px;font-size:11px;color:#8b949e;line-height:14px">Ready</div><div class="a" style="left:963px;top:43px;width:676px;height:880px;background:#161b22"></div><div class="a" style="left:974.5px;top:52.5px;font-size:11.5px;font-weight:bold;color:#2a78dc;line-height:14px;letter-spacing:0.2px">PREVIEW</div><div class="a" style="left:963px;top:76px;width:676px;height:1px;background:#30363d"></div><div class="a" style="left:963px;top:113px;width:676px;height:1px;background:#30363d"></div><div class="a" style="left:971px;top:81.5px;width:123.5px;height:28px;border:1px solid #30363d;border-radius:6px;background:#1c2230"></div><div class="a" style="left:983px;top:88.5px;font-size:12px;font-weight:bold;color:#dfe4ea;line-height:15px">Internal</div><svg style="position:absolute;left:1079.5px;top:89px" width="13" height="13" viewBox="0 0 24 24" fill="none" stroke="#e6edf3" stroke-width="3.2" stroke-linecap="round" stroke-linejoin="round" ><path d="m6 9 6 6 6-6"/></svg><div class="a" style="left:1101px;top:86px;width:1px;height:17px;background:#30363d"></div><div class="a" style="left:1242px;top:86px;width:1px;height:17px;background:#30363d"></div><div class="a" style="left:1313px;top:86px;width:1px;height:17px;background:#30363d"></div><div class="a" style="left:1384px;top:86px;width:1px;height:17px;background:#30363d"></div><svg style="position:absolute;left:1113.5px;top:85.5px" width="17" height="17" viewBox="0 0 24 24" fill="none" stroke="#8b949e" stroke-width="1.8" stroke-linecap="round" stroke-linejoin="round" ><circle cx="11" cy="11" r="8"/><line x1="21" x2="16.65" y1="21" y2="16.65"/><line x1="8" x2="14" y1="11" y2="11"/></svg><div class="a" style="left:1150.5px;top:88px;font-size:12px;color:#8b949e;line-height:14px">Fit</div><svg style="position:absolute;left:1183.5px;top:85.5px" width="17" height="17" viewBox="0 0 24 24" fill="none" stroke="#8b949e" stroke-width="1.8" stroke-linecap="round" stroke-linejoin="round" ><circle cx="11" cy="11" r="8"/><line x1="21" x2="16.65" y1="21" y2="16.65"/><line x1="11" x2="11" y1="8" y2="14"/><line x1="8" x2="14" y1="11" y2="11"/></svg><svg style="position:absolute;left:1214px;top:87px" width="16" height="16" viewBox="0 0 24 24" fill="none" stroke="#8b949e" stroke-width="1.8" stroke-linecap="round" stroke-linejoin="round" ><path d="M8 3H5a2 2 0 0 0-2 2v3"/><path d="M21 8V5a2 2 0 0 0-2-2h-3"/><path d="M3 16v3a2 2 0 0 0 2 2h3"/><path d="M16 21h3a2 2 0 0 0 2-2v-3"/></svg><svg style="position:absolute;left:1254.5px;top:87px" width="16" height="16" viewBox="0 0 24 24" fill="none" stroke="#8b949e" stroke-width="1.8" stroke-linecap="round" stroke-linejoin="round" ><path d="M3 12a9 9 0 1 0 9-9 9.75 9.75 0 0 0-6.74 2.74L3 8"/><path d="M3 3v5h5"/></svg><svg style="position:absolute;left:1285.5px;top:87px" width="16" height="16" viewBox="0 0 24 24" fill="none" stroke="#8b949e" stroke-width="1.8" stroke-linecap="round" stroke-linejoin="round" ><path d="M21 12a9 9 0 1 1-9-9c2.52 0 4.93 1 6.74 2.74L21 8"/><path d="M21 3v5h-5"/></svg><svg style="position:absolute;left:1326px;top:87px" width="16" height="16" viewBox="0 0 24 24" fill="none" stroke="#4a515a" stroke-width="1.8" stroke-linecap="round" stroke-linejoin="round" ><path d="m15 18-6-6 6-6"/></svg><svg style="position:absolute;left:1356px;top:87px" width="16" height="16" viewBox="0 0 24 24" fill="none" stroke="#4a515a" stroke-width="1.8" stroke-linecap="round" stroke-linejoin="round" ><path d="m9 18 6-6-6-6"/></svg><svg style="position:absolute;left:1397px;top:87px" width="16" height="16" viewBox="0 0 24 24" fill="none" stroke="#8b949e" stroke-width="1.8" stroke-linecap="round" stroke-linejoin="round" ><rect width="14" height="14" x="8" y="8" rx="2" ry="2"/><path d="M4 16c-1.1 0-2-.9-2-2V4c0-1.1.9-2 2-2h10c1.1 0 2 .9 2 2"/></svg><svg style="position:absolute;left:1427px;top:87px" width="16" height="16" viewBox="0 0 24 24" fill="none" stroke="#8b949e" stroke-width="1.8" stroke-linecap="round" stroke-linejoin="round" ><path d="M21 15v4a2 2 0 0 1-2 2H5a2 2 0 0 1-2-2v-4"/><polyline points="7 10 12 15 17 10"/><line x1="12" x2="12" y1="15" y2="3"/></svg><div class="a" style="left:963px;top:114px;width:676px;height:809px;background:conic-gradient(#151a23 25%,#1a202f 0 50%,#151a23 0 75%,#1a202f 0) 8px 4px/20px 20px;overflow:hidden"><div class="a" style="left:12px;top:35px;width:636px;height:1000px;background:#fff;box-shadow:0 0 8px rgba(0,0,0,.55)"></div><div class="a" style="left:51.16px;top:74.16px;width:78.33px;height:78.33px;background:#000"></div><div class="a" style="left:70.74px;top:93.74px;width:58.74px;height:58.74px;background:#fff"></div><div class="a" style="left:129.49px;top:93.74px;width:19.58px;height:78.33px;background:#000"></div><div class="a" style="left:70.74px;top:152.49px;width:58.74px;height:19.58px;background:#000"></div><div class="a" style="left:84.84px;top:107.84px;width:31.33px;height:31.33px;background:#000"></div><div class="a" style="left:51.16px;top:230.81px;width:548.28px;height:2.35px;background:#000"></div><div class="a" style="left:51.16px;top:426.63px;width:548.28px;height:2.35px;background:#000"></div><div class="a" style="left:481.95px;top:269.98px;width:117.49px;height:117.49px;border:2.35px solid #000"></div><div class="a" style="left:51.16px;top:739.93px;width:548.28px;height:195.81px;border:2.35px solid #000"></div><div class="a" style="left:325.30px;top:739.93px;width:2.35px;height:195.81px;background:#000"></div><div class="a" style="left:184px;top:62.05px;font-size:50px;font-weight:bold;color:#000;line-height:57.45px;transform:scaleX(0.79);transform-origin:0 0">Intershipping, Inc.</div><div class="a" style="left:184px;top:119.28px;font-size:25px;font-weight:bold;color:#000;line-height:28.73px;transform:scaleX(0.79);transform-origin:0 0">1000 Shipping Lane</div><div class="a" style="left:184px;top:151.27px;font-size:25px;font-weight:bold;color:#000;line-height:28.73px;transform:scaleX(0.79);transform-origin:0 0">Shelbyville TN 38102</div><div class="a" style="left:184px;top:181.77px;font-size:25px;font-weight:bold;color:#000;line-height:28.73px;transform:scaleX(0.79);transform-origin:0 0">United States (USA)</div><div class="a" style="left:92px;top:777.46px;font-size:33px;font-weight:bold;color:#000;line-height:37.92px;transform:scaleX(0.81);transform-origin:0 0">Ctr. X34B-1</div><div class="a" style="left:379.5px;top:730.98px;font-size:180px;font-weight:bold;color:#000;line-height:206.82px;transform:scaleX(0.682);transform-origin:0 0">CA</div><div class="a" style="left:50px;top:363px;width:267px;height:25px;background:#b0d3f4;border:1.5px solid #4a95e0"></div><div class="a m" style="left:51px;top:267.50px;font-size:23.2px;font-weight:normal;-webkit-text-stroke:0.5px #000;color:#000;line-height:26.29px;transform:scale(1.0,1.12);transform-origin:0 0">John Doe</div><div class="a m" style="left:51px;top:298.50px;font-size:23.2px;font-weight:normal;-webkit-text-stroke:0.5px #000;color:#000;line-height:26.29px;transform:scale(1.0,1.12);transform-origin:0 0">100 Main Street</div><div class="a m" style="left:51px;top:330.00px;font-size:23.2px;font-weight:normal;-webkit-text-stroke:0.5px #000;color:#000;line-height:26.29px;transform:scale(1.0,1.12);transform-origin:0 0">Springfield TN 39021</div><div class="a m" style="left:51px;top:361.50px;font-size:23.2px;font-weight:normal;-webkit-text-stroke:0.5px #0a2850;color:#0a2850;line-height:26.29px;transform:scale(1.0,1.12);transform-origin:0 0">United States (USA)</div><div class="a m" style="left:511.5px;top:300.43px;font-size:15.6px;font-weight:normal;-webkit-text-stroke:0px #000;color:#000;line-height:17.67px;transform:scale(1.0,0.88);transform-origin:0 0">Permit</div><div class="a m" style="left:511.5px;top:339.43px;font-size:15.6px;font-weight:normal;-webkit-text-stroke:0px #000;color:#000;line-height:17.67px;transform:scale(1.0,0.88);transform-origin:0 0">123456</div><svg class="a" style="left:90.30px;top:466px" width="481.7" height="211" shape-rendering="crispEdges"><rect x="0.00" y="0" width="7.83" height="211"/><rect x="11.75" y="0" width="3.92" height="211"/><rect x="23.50" y="0" width="3.92" height="211"/><rect x="43.08" y="0" width="3.92" height="211"/><rect x="54.83" y="0" width="11.75" height="211"/><rect x="74.41" y="0" width="7.83" height="211"/><rect x="86.16" y="0" width="7.83" height="211"/><rect x="101.82" y="0" width="11.75" height="211"/><rect x="121.40" y="0" width="3.92" height="211"/><rect x="129.24" y="0" width="7.83" height="211"/><rect x="144.90" y="0" width="3.92" height="211"/><rect x="152.73" y="0" width="11.75" height="211"/><rect x="172.32" y="0" width="7.83" height="211"/><rect x="187.98" y="0" width="3.92" height="211"/><rect x="199.73" y="0" width="11.75" height="211"/><rect x="215.39" y="0" width="7.83" height="211"/><rect x="227.14" y="0" width="11.75" height="211"/><rect x="246.72" y="0" width="3.92" height="211"/><rect x="258.47" y="0" width="7.83" height="211"/><rect x="274.14" y="0" width="11.75" height="211"/><rect x="289.80" y="0" width="3.92" height="211"/><rect x="301.55" y="0" width="11.75" height="211"/><rect x="317.22" y="0" width="7.83" height="211"/><rect x="328.97" y="0" width="11.75" height="211"/><rect x="344.63" y="0" width="11.75" height="211"/><rect x="360.30" y="0" width="3.92" height="211"/><rect x="372.04" y="0" width="7.83" height="211"/><rect x="387.71" y="0" width="11.75" height="211"/><rect x="403.37" y="0" width="15.67" height="211"/><rect x="422.96" y="0" width="3.92" height="211"/><rect x="430.79" y="0" width="7.83" height="211"/><rect x="450.37" y="0" width="11.75" height="211"/><rect x="466.03" y="0" width="3.92" height="211"/><rect x="473.87" y="0" width="7.83" height="211"/></svg><div class="a m" style="left:237px;top:675px;font-size:39px;color:#000;line-height:44px;transform:scaleY(1.1);transform-origin:0 0">12345678</div><div class="a" style="left:246px;top:0;width:1px;height:809px;background:rgba(70,140,210,.7)"></div><div class="a" style="left:0;top:378px;width:668px;height:1px;background:rgba(70,140,210,.7)"></div><div class="a" style="left:260px;top:392.5px;width:99px;height:18px;border-radius:4px;background:#161b22"></div><div class="a m" style="left:267px;top:395px;font-size:10px;font-weight:bold;color:#eef1f4;line-height:13px">X: 299  Y: 438</div><div class="a" style="left:668px;top:0;width:8px;height:661px;border-radius:4px;background:#30363d"></div></div></body></html>
